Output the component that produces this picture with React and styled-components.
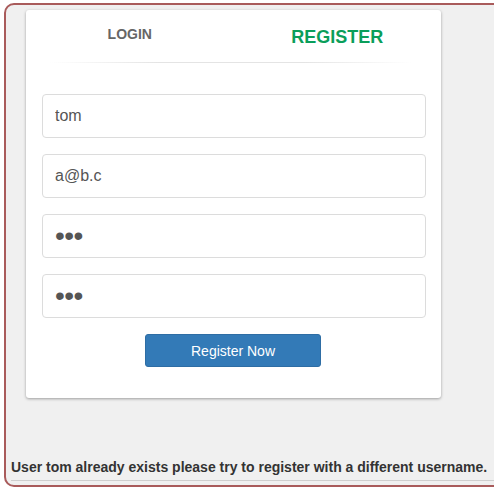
import styled, { createGlobalStyle } from "styled-components";

const Global = createGlobalStyle`
  html, body {
    margin: 0;
    padding: 0;
    background: #fff;
    overflow: hidden;
  }
  body {
    font-family: "Liberation Sans", Arial, sans-serif;
  }
`;

function App() {
  return (
    <>
      <Global />
      <Frame>
        <Card>
          <Tabs>
            <Tab>LOGIN</Tab>
            <Tab active>REGISTER</Tab>
          </Tabs>
          <Divider />
          <Form>
            <Input type="text" defaultValue="tom" />
            <Input type="text" defaultValue="a@b.c" />
            <Input type="password" defaultValue="abc" />
            <Input type="password" defaultValue="abc" />
            <Button type="button">Register Now</Button>
          </Form>
        </Card>
        <Message>
          User tom already exists please try to register with a different username.
        </Message>
        <Rule />
      </Frame>
    </>
  );
}

const Frame = styled.div`
  margin: 3px 0 0 4px;
  width: 520px;
  height: 480px;
  border: 2px solid #a95b5b;
  border-radius: 10px;
  background: #f0f0f0;
  display: flex;
  flex-direction: column;
  box-sizing: content-box;
`;

const Card = styled.div`
  margin: 5px 0 0 20px;
  width: 415px;
  height: 388px;
  background: #fff;
  border-radius: 3px;
  box-shadow: 0 1px 3px rgba(0, 0, 0, 0.35);
  box-sizing: border-box;
  padding: 0 15px 0 16px;
`;

const Tabs = styled.div`
  display: grid;
  grid-template-columns: 1fr 1fr;
  height: 52px;
  align-items: center;
  margin: 0 -15px 0 -16px;
`;

const Tab = styled.div`
  text-align: center;
  font-weight: bold;
  font-size: ${(p) => (p.active ? "18px" : "14px")};
  color: ${(p) => (p.active ? "#0a9e5a" : "#666")};
  margin-top: ${(p) => (p.active ? "2px" : "-4px")};
`;

const Divider = styled.div`
  height: 1px;
  margin: 0 13px 0 8px;
  background: linear-gradient(to right, #fff 0%, #e4e4e4 30%, #e4e4e4 70%, #fff 100%);
`;

const Form = styled.div`
  display: flex;
  flex-direction: column;
  gap: 16px;
  padding-top: 31px;
`;

const Input = styled.input`
  width: 384px;
  height: 44px;
  box-sizing: border-box;
  border: 1px solid #dcdcdc;
  border-radius: 4px;
  padding: 0 12px;
  font-family: "Liberation Sans", Arial, sans-serif;
  font-size: 16px;
  color: #555;
  outline: none;
  &[type="password"] {
    font-size: 28px;
    letter-spacing: -0.5px;
  }
`;

const Button = styled.button`
  align-self: center;
  width: 176px;
  height: 33px;
  border: 1px solid #2e6da4;
  border-radius: 3px;
  background: #337ab7;
  color: #fff;
  font-family: "Liberation Sans", Arial, sans-serif;
  font-size: 14px;
  margin-left: -2px;
`;

const Message = styled.div`
  margin: 61px 0 0 5px;
  font-weight: bold;
  font-size: 14px;
  color: #333;
`;

const Rule = styled.div`
  margin: 5px 0 0 5px;
  height: 1px;
  background: #cfcfcf;
`;

export default App;
